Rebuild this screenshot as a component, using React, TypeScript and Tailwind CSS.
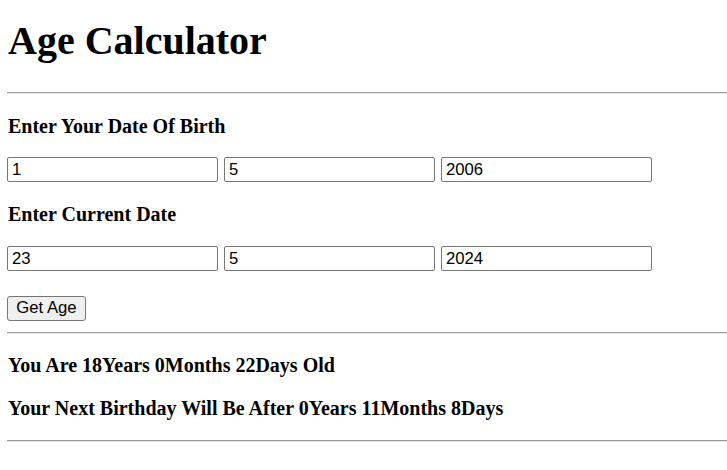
import { useState } from "react";

const serif = "font-['Liberation_Serif','Times_New_Roman',serif]";
const sans = "font-['Liberation_Sans',Arial,sans-serif]";

function Rule({ className }: { className: string }) {
  return (
    <div className={`w-[720px] ${className}`}>
      <div className="h-px bg-[#9a9a9a]" />
      <div className="h-px bg-[#e6e6e6]" />
    </div>
  );
}

function Heading({ text, className }: { text: string; className: string }) {
  return (
    <div
      className={`${serif} text-[20px] leading-[24px] font-bold text-black pl-[1px] ${className}`}
    >
      {text}
    </div>
  );
}

function DateRow({ values, className }: { values: string[]; className: string }) {
  return (
    <div className={`flex gap-[6px] ${className}`}>
      {values.map((v, i) => (
        <input
          key={i}
          defaultValue={v}
          className={`${sans} w-[211px] h-[25px] border border-[#767676] rounded-[2px] pl-[4px] text-[16.7px] text-black bg-white outline-none`}
        />
      ))}
    </div>
  );
}

export default function App() {
  const [dob] = useState(["1", "5", "2006"]);
  const [today] = useState(["23", "5", "2024"]);

  return (
    <div className="w-[727px] h-[470px] bg-white overflow-hidden flex flex-col pl-[7px] pt-[18px]">
      <h1
        className={`${serif} text-[40px] leading-[46px] font-bold text-black pl-[1px]`}
      >
        Age Calculator
      </h1>
      <Rule className="mt-[28px]" />
      <Heading text="Enter Your Date Of Birth" className="mt-[20px]" />
      <DateRow values={dob} className="mt-[19px]" />
      <Heading text="Enter Current Date" className="mt-[20px]" />
      <DateRow values={today} className="mt-[20px]" />
      <button
        className={`${sans} mt-[25px] w-[79px] h-[25px] bg-[#efefef] border border-[#767676] rounded-[3px] text-[16.7px] text-black leading-none`}
      >
        Get Age
      </button>
      <Rule className="mt-[11px]" />
      <Heading text="You Are 18Years 0Months 22Days Old" className="mt-[19px]" />
      <Heading
        text="Your Next Birthday Will Be After 0Years 11Months 8Days"
        className="mt-[19px]"
      />
      <Rule className="mt-[20px]" />
    </div>
  );
}
